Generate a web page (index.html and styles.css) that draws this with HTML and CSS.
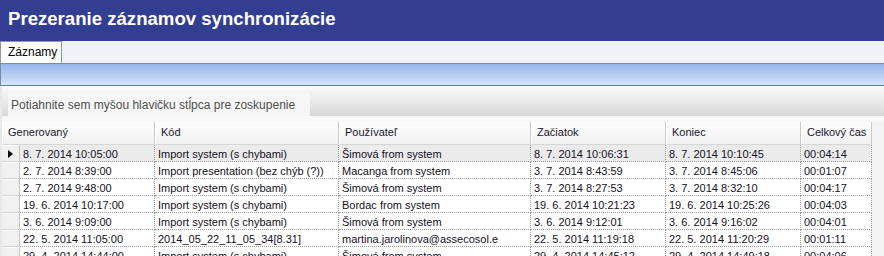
FILE: index.html
```html
<!DOCTYPE html>
<html lang="sk">
<head>
<meta charset="utf-8">
<title>Prezeranie záznamov synchronizácie</title>
<link rel="stylesheet" href="styles.css">
</head>
<body>
<div class="titlebar">Prezeranie záznamov synchronizácie</div>
<div class="tabstrip"><div class="tab">Záznamy</div></div>
<div class="bluebar"></div>
<div class="content">
  <div class="grouppanel"><div class="grouptext">Potiahnite sem myšou hlavičku stĺpca pre zoskupenie</div></div>
  <div class="gap"></div>
  <div class="grid">
    <div class="hcell span2">Generovaný</div>
    <div class="hcell">Kód</div>
    <div class="hcell">Používateľ</div>
    <div class="hcell">Začiatok</div>
    <div class="hcell">Koniec</div>
    <div class="hcell">Celkový čas</div>

    <div class="ind sel"><span class="arrow"></span></div>
    <div class="cell sel">8. 7. 2014 10:05:00</div><div class="cell sel">Import system (s chybami)</div><div class="cell sel">Šimová from system</div><div class="cell sel">8. 7. 2014 10:06:31</div><div class="cell sel">8. 7. 2014 10:10:45</div><div class="cell sel">00:04:14</div>

    <div class="ind"></div>
    <div class="cell">2. 7. 2014 8:39:00</div><div class="cell">Import presentation (bez chýb (?))</div><div class="cell">Macanga from system</div><div class="cell">3. 7. 2014 8:43:59</div><div class="cell">3. 7. 2014 8:45:06</div><div class="cell">00:01:07</div>

    <div class="ind"></div>
    <div class="cell">2. 7. 2014 9:48:00</div><div class="cell">Import system (s chybami)</div><div class="cell">Šimová from system</div><div class="cell">3. 7. 2014 8:27:53</div><div class="cell">3. 7. 2014 8:32:10</div><div class="cell">00:04:17</div>

    <div class="ind"></div>
    <div class="cell">19. 6. 2014 10:17:00</div><div class="cell">Import system (s chybami)</div><div class="cell">Bordac from system</div><div class="cell">19. 6. 2014 10:21:23</div><div class="cell">19. 6. 2014 10:25:26</div><div class="cell">00:04:03</div>

    <div class="ind"></div>
    <div class="cell">3. 6. 2014 9:09:00</div><div class="cell">Import system (s chybami)</div><div class="cell">Šimová from system</div><div class="cell">3. 6. 2014 9:12:01</div><div class="cell">3. 6. 2014 9:16:02</div><div class="cell">00:04:01</div>

    <div class="ind"></div>
    <div class="cell">22. 5. 2014 11:05:00</div><div class="cell">2014_05_22_11_05_34[8.31]</div><div class="cell">martina.jarolinova@assecosol.e</div><div class="cell">22. 5. 2014 11:19:18</div><div class="cell">22. 5. 2014 11:20:29</div><div class="cell">00:01:11</div>

    <div class="ind"></div>
    <div class="cell">29. 4. 2014 14:44:00</div><div class="cell">Import system (s chybami)</div><div class="cell">Šimová from system</div><div class="cell">29. 4. 2014 14:45:12</div><div class="cell">29. 4. 2014 14:49:18</div><div class="cell">00:04:06</div>
  </div>
</div>
</body>
</html>
```
FILE: styles.css
```css
html, body {
  margin: 0;
  padding: 0;
  width: 884px;
  height: 256px;
  overflow: hidden;
  background: #f3f3f3;
  font-family: "Liberation Sans", Arial, sans-serif;
}
.titlebar {
  height: 41px;
  background: #323e92;
  color: #ffffff;
  font-weight: bold;
  font-size: 18.6px;
  line-height: 38px;
  padding-left: 8px;
  box-sizing: border-box;
}
.tabstrip {
  height: 22px;
  background: #eff3f9;
  display: flex;
}
.tab {
  width: 62px;
  height: 22px;
  box-sizing: border-box;
  background: #ffffff;
  border: 1px solid #8e9aaa;
  border-bottom: none;
  font-size: 12px;
  line-height: 21px;
  padding-left: 7px;
  color: #000;
}
.bluebar {
  height: 23px;
  box-sizing: border-box;
  border-top: 1px solid #7c8ca4;
  border-bottom: 1px solid #5e7ea9;
  border-left: 1px solid #7c8ca4;
  background: linear-gradient(#99b5ea, #d3e3fa);
}
.content {
  border-left: 2px solid #e8e8e8;
}
.grouppanel {
  height: 30px;
  box-sizing: border-box;
  padding: 7px 0 0 6px;
  background: linear-gradient(#fbfbfb, #d8d8d8);
}
.grouptext {
  width: 302px;
  height: 23px;
  box-sizing: border-box;
  background: #f6f6f6;
  color: #4f4f4f;
  font-size: 12px;
  line-height: 20px;
  padding: 2px 0 0 3px;
  white-space: nowrap;
}
.gap {
  height: 6px;
  background: #f7f7f7;
}
.grid {
  display: grid;
  grid-template-columns: 18px 135px 184px 192px 135px 135px 71px;
  grid-template-rows: 23px;
  grid-auto-rows: 17px;
  font-size: 11px;
  color: #14101e;
  background: #f3f3f3;
}
.hcell {
  box-sizing: border-box;
  padding-left: 5px;
  line-height: 21px;
  background: linear-gradient(#fdfdfd, #f1f1f1);
  border-left: 1px solid #ffffff;
  border-right: 1px solid #c9c9c9;
  border-bottom: 1px solid #d6d6d6;
  white-space: nowrap;
  overflow: hidden;
  color: #1a1630;
}
.span2 { grid-column: span 2; }
.cell {
  box-sizing: border-box;
  padding: 2px 0 0 3px;
  line-height: 14px;
  background: #ffffff;
  border-right: 1px dotted #a0a0a0;
  border-bottom: 1px dotted #a0a0a0;
  white-space: nowrap;
  overflow: hidden;
}
.cell.sel { background: #ebebeb; }
.ind {
  box-sizing: border-box;
  background: #f0f0f0;
  border-top: 1px solid #fbfbfb;
  border-bottom: 1px solid #d4d4d4;
  border-right: 1px solid #c4c4c4;
  display: flex;
  align-items: center;
  padding-left: 6px;
}
.arrow {
  width: 0;
  height: 0;
  border-top: 4px solid transparent;
  border-bottom: 4px solid transparent;
  border-left: 5px solid #000;
}
```
